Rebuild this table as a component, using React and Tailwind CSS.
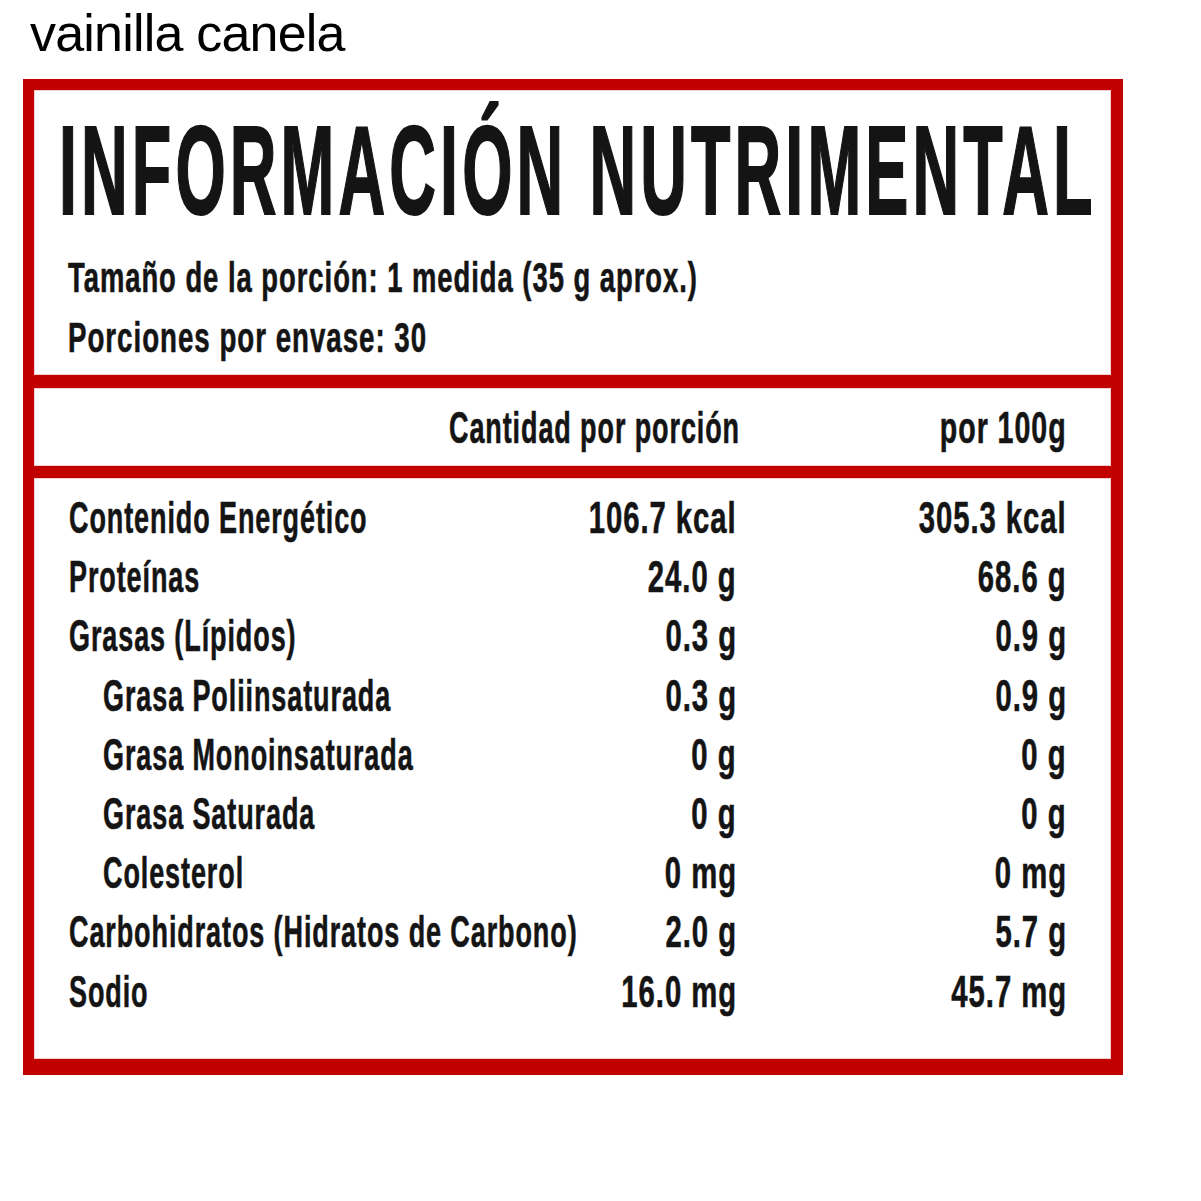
const rows = [
  { label: 'Contenido Energético', serving: '106.7 kcal', per100: '305.3 kcal' },
  { label: 'Proteínas', serving: '24.0 g', per100: '68.6 g' },
  { label: 'Grasas (Lípidos)', serving: '0.3 g', per100: '0.9 g' },
  { label: 'Grasa Poliinsaturada', serving: '0.3 g', per100: '0.9 g', sub: true },
  { label: 'Grasa Monoinsaturada', serving: '0 g', per100: '0 g', sub: true },
  { label: 'Grasa Saturada', serving: '0 g', per100: '0 g', sub: true },
  { label: 'Colesterol', serving: '0 mg', per100: '0 mg', sub: true },
  { label: 'Carbohidratos (Hidratos de Carbono)', serving: '2.0 g', per100: '5.7 g' },
  { label: 'Sodio', serving: '16.0 mg', per100: '45.7 mg' },
];

// the label font is a narrow one, so squeeze Liberation Sans Bold sideways
function Left({ children }) {
  return <span className="inline-block whitespace-nowrap origin-left scale-x-[0.60]">{children}</span>;
}

function Right({ children }) {
  return (
    <div className="flex justify-end whitespace-nowrap -mr-[2px]">
      <span className="inline-block shrink-0 origin-right scale-x-[0.65]">{children}</span>
    </div>
  );
}

export default function App() {
  return (
    <div className="w-[1201px] h-[1201px] overflow-hidden bg-white font-['Liberation_Sans',Arial,sans-serif] text-[#141414]">
      <div className="h-[79px] pt-[7px] pl-[30px] text-[52px] leading-none tracking-[-0.8px] text-black">
        vainilla canela
      </div>

      <div className="ml-[23px] w-[1100px] h-[996px] bg-[#c10000] pt-[11px] pl-[11px] pr-[12px] flex flex-col">
        <section className="h-[285px] overflow-hidden bg-white border border-[#f6cdd2] font-bold tracking-[1.5px] [-webkit-text-stroke:0.6px_#141414]">
          <div className="pt-[17px] pl-[24px] h-[143px] text-[126px] leading-[126px] tracking-[8px] whitespace-nowrap [-webkit-text-stroke:2px_#141414]">
            <span className="inline-block origin-left scale-x-[0.513]">INFORMACIÓN NUTRIMENTAL</span>
          </div>
          <div className="pt-[14px] pl-[33px] text-[42px] leading-[60px] whitespace-nowrap">
            <div className="h-[60px]">
              <span className="inline-block origin-left scale-x-[0.652]">Tamaño de la porción: 1 medida (35 g aprox.)</span>
            </div>
            <div className="h-[60px]">
              <span className="inline-block origin-left scale-x-[0.659]">Porciones por envase: 30</span>
            </div>
          </div>
        </section>

        <section className="mt-[13px] h-[78px] overflow-hidden bg-white border border-[#f6cdd2] font-bold text-[45px] tracking-[1.5px] [-webkit-text-stroke:0.6px_#141414]">
          <div className="pt-[2px] pl-[34px] pr-[45px] h-[76px] leading-[74px] grid grid-cols-[minmax(0,1fr)_330px_327px]">
            <div />
            <div className="flex justify-end whitespace-nowrap -mr-[2px]">
              <span className="inline-block shrink-0 origin-right scale-x-[0.60]">Cantidad por porción</span>
            </div>
            <div className="flex justify-end whitespace-nowrap -mr-[2px]">
              <span className="inline-block shrink-0 origin-right scale-x-[0.635]">por 100g</span>
            </div>
          </div>
        </section>

        <section className="mt-[12px] h-[581px] overflow-hidden bg-white border border-[#f6cdd2] font-bold text-[45px] tracking-[1.5px] pt-[9px] pl-[34px] pr-[45px] [-webkit-text-stroke:0.6px_#141414]">
          {rows.map(r => (
            <div key={r.label} className="h-[59.2px] leading-[59.2px] grid grid-cols-[minmax(0,1fr)_330px_330px]">
              <div className={`whitespace-nowrap ${r.sub ? 'pl-[34px]' : ''}`}>
                <Left>{r.label}</Left>
              </div>
              <Right>{r.serving}</Right>
              <Right>{r.per100}</Right>
            </div>
          ))}
        </section>
      </div>
    </div>
  );
}
